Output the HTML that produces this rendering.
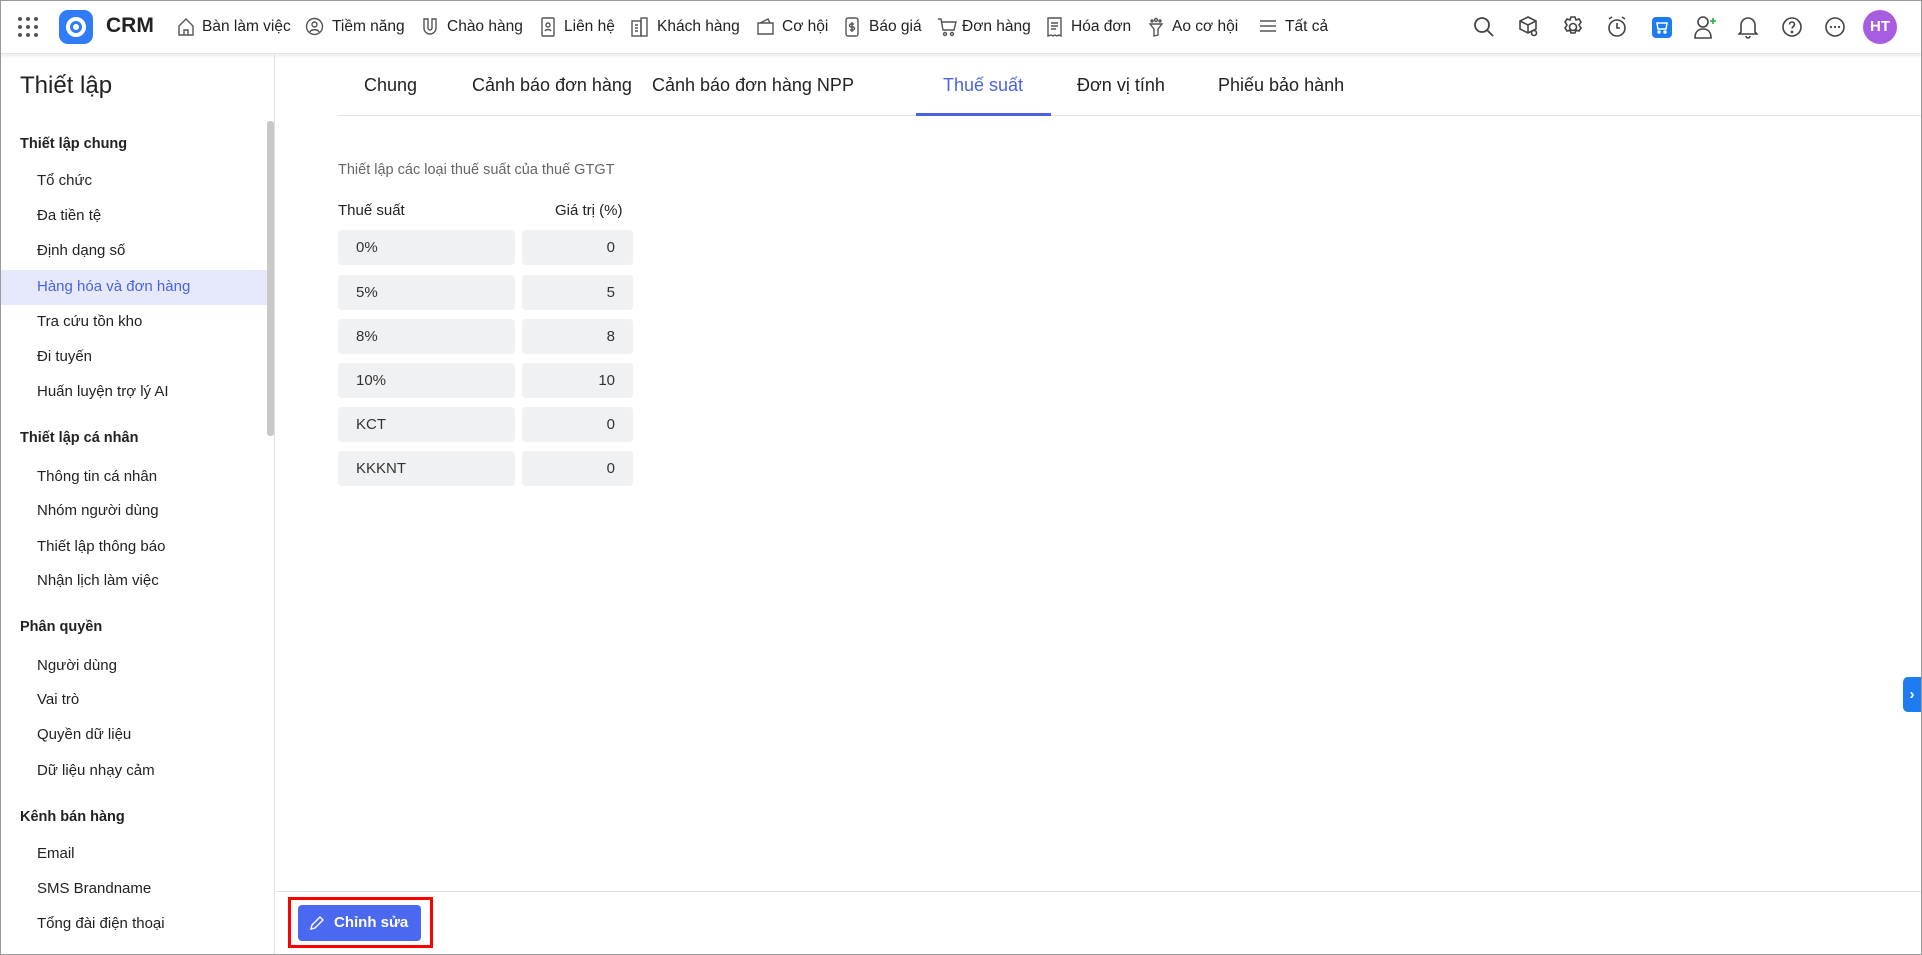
<!DOCTYPE html>
<html><head><meta charset="utf-8"><style>
*{margin:0;padding:0;box-sizing:border-box}
body{width:1922px;height:955px;overflow:hidden;font-family:"Liberation Sans","Noto Sans CJK SC",sans-serif;color:#222;background:#fff;position:relative}
.frame{position:absolute;inset:0;border:1px solid #9a9a9a;pointer-events:none;z-index:10}
.top{position:absolute;left:0;top:0;width:1922px;height:54px;background:#fff;box-shadow:0 2px 4px rgba(0,0,0,.08);border-bottom:1px solid #e4e4e4;z-index:5}
.a{position:absolute;white-space:nowrap}
.nav{font-size:15.5px;color:#222;top:18px}
.ic{position:absolute;top:17px}
.side{position:absolute;left:0;top:55px;width:275px;height:900px;border-right:1px solid #e0e0e0}
.h{font-size:14.5px;font-weight:bold;color:#222;left:20px}
.it{font-size:15px;color:#222;left:37px}
.tab{font-size:18px;top:75px;color:#222}
.cell{position:absolute;background:#f0f1f3;border-radius:4px;height:35px;font-size:15px;line-height:35px;color:#333}
</style></head><body>
<div class="frame"></div>
<div class="top">
<svg class="ic" style="left:17px;top:16px" width="22" height="22" viewBox="0 0 22 22" fill="#555"><circle cx="3" cy="3" r="2"/><circle cx="11" cy="3" r="2"/><circle cx="19" cy="3" r="2"/><circle cx="3" cy="11" r="2"/><circle cx="11" cy="11" r="2"/><circle cx="19" cy="11" r="2"/><circle cx="3" cy="19" r="2"/><circle cx="11" cy="19" r="2"/><circle cx="19" cy="19" r="2"/></svg>
<div class="a" style="left:59px;top:10px;width:34px;height:34px;border-radius:9px;background:#2f7cf6"><svg width="34" height="34" viewBox="0 0 34 34"><circle cx="17" cy="17" r="8" fill="none" stroke="#fff" stroke-width="4"/><circle cx="17" cy="17" r="3" fill="#fff"/></svg></div>
<div class="a" style="left:106px;top:14px;font-size:21px;font-weight:bold">CRM</div>
<span class="a nav" style="left:202px">Bàn làm việc</span>
<span class="a nav" style="left:332px">Tiềm năng</span>
<span class="a nav" style="left:447px">Chào hàng</span>
<span class="a nav" style="left:564px">Liên hệ</span>
<span class="a nav" style="left:657px">Khách hàng</span>
<span class="a nav" style="left:782px">Cơ hội</span>
<span class="a nav" style="left:869px">Báo giá</span>
<span class="a nav" style="left:962px">Đơn hàng</span>
<span class="a nav" style="left:1071px">Hóa đơn</span>
<span class="a nav" style="left:1172px">Ao cơ hội</span>
<span class="a nav" style="left:1285px">Tất cả</span>
<svg class="ic" style="left:177px" width="18" height="20" viewBox="0 0 18 20" fill="none" stroke="#555" stroke-width="1.4"><path d="M2 9L9 2l7 7v9H2z"/><path d="M7 18v-5h4v5"/></svg>
<svg class="ic" style="left:305px" width="19" height="19" viewBox="0 0 19 19" fill="none" stroke="#555" stroke-width="1.4"><circle cx="9.5" cy="9.5" r="8"/><circle cx="9.5" cy="7.5" r="2.5"/><path d="M5 15c1-3 8-3 9 0"/></svg>
<svg class="ic" style="left:421px" width="18" height="20" viewBox="0 0 18 20" fill="none" stroke="#555" stroke-width="1.4"><path d="M3 2v9a6 6 0 0012 0V2h-4v9a2 2 0 01-4 0V2z"/></svg>
<svg class="ic" style="left:540px" width="16" height="20" viewBox="0 0 16 20" fill="none" stroke="#555" stroke-width="1.4"><rect x="2" y="1" width="12" height="18" rx="1"/><circle cx="8" cy="8" r="2"/><path d="M5 14c1-2 5-2 6 0"/></svg>
<svg class="ic" style="left:630px" width="19" height="20" viewBox="0 0 19 20" fill="none" stroke="#555" stroke-width="1.4"><rect x="2" y="4" width="9" height="15"/><rect x="11" y="1" width="6" height="18"/><path d="M5 8h3M5 11h3M5 14h3"/></svg>
<svg class="ic" style="left:756px" width="19" height="19" viewBox="0 0 19 19" fill="none" stroke="#555" stroke-width="1.4"><path d="M2 6h15v11H2zM4 6l8-4 2 4"/></svg>
<svg class="ic" style="left:845px" width="14" height="20" viewBox="0 0 14 20" fill="none" stroke="#555" stroke-width="1.4"><rect x="1" y="1" width="12" height="18" rx="2"/><path d="M7 5v10M9 7H6a1.5 1.5 0 000 3h2a1.5 1.5 0 010 3H5"/></svg>
<svg class="ic" style="left:937px" width="20" height="20" viewBox="0 0 20 20" fill="none" stroke="#555" stroke-width="1.4"><path d="M1 2h3l2 11h11l2-8H5"/><circle cx="8" cy="17" r="1.5"/><circle cx="15" cy="17" r="1.5"/></svg>
<svg class="ic" style="left:1047px" width="15" height="20" viewBox="0 0 15 20" fill="none" stroke="#555" stroke-width="1.4"><path d="M1 1h13v18l-2-1-2 1-2-1-2 1-2-1-3 1z"/><path d="M4 6h7M4 9h7M4 12h5"/></svg>
<svg class="ic" style="left:1148px" width="16" height="20" viewBox="0 0 16 20" fill="none" stroke="#555" stroke-width="1.4"><path d="M2 7h12l-4 5v6l-4 1v-7z"/><circle cx="8" cy="3" r="1.5"/><circle cx="4" cy="4" r="1"/><circle cx="12" cy="4" r="1"/></svg>
<svg class="ic" style="left:1259px" width="18" height="18" viewBox="0 0 18 18" stroke="#555" stroke-width="1.4"><path d="M1 4h16M1 9h16M1 14h16"/></svg>
<svg class="ic" style="left:1473px;top:16px" width="22" height="22" viewBox="0 0 22 22" fill="none" stroke="#444" stroke-width="1.8"><circle cx="9" cy="9" r="7"/><path d="M14 14l6 6"/></svg>
<svg class="ic" style="left:1518px;top:16px" width="22" height="22" viewBox="0 0 22 22" fill="none" stroke="#444" stroke-width="1.6"><path d="M10 1l8 4v8l-8 4-8-4V5z M2 5l8 4 8-4M10 9v8"/><circle cx="16" cy="17" r="2.5"/></svg>
<svg class="ic" style="left:1562px;top:16px" width="22" height="22" viewBox="0 0 22 22" fill="none" stroke="#444" stroke-width="1.6"><circle cx="11" cy="11" r="3.5"/><path d="M9 1h4l1 3 3-1 2 3-2 3 2 3-2 3-3-1-1 3H9l-1-3-3 1-2-3 2-3-2-3 2-3 3 1z"/></svg>
<svg class="ic" style="left:1606px;top:16px" width="22" height="22" viewBox="0 0 22 22" fill="none" stroke="#444" stroke-width="1.6"><circle cx="11" cy="12" r="8"/><path d="M11 7v5h3M3 3l3-2M19 3l-3-2"/></svg>
<div class="a" style="left:1652px;top:17px;width:20px;height:21px;border-radius:4px;background:#1e7cf2"><svg width="20" height="21" viewBox="0 0 20 21" fill="none" stroke="#fff" stroke-width="1.5"><path d="M5 6h10l-1 6H6z"/><circle cx="7" cy="15" r="1"/><circle cx="13" cy="15" r="1"/></svg></div>
<svg class="ic" style="left:1693px;top:14px" width="26" height="26" viewBox="0 0 26 26" fill="none" stroke="#444" stroke-width="1.6"><circle cx="10" cy="8" r="5"/><path d="M2 24c0-6 3-9 8-9s8 3 8 9z"/><path d="M20 4v6M17 7h6" stroke="#2aa84a"/></svg>
<svg class="ic" style="left:1738px;top:15px" width="20" height="24" viewBox="0 0 20 24" fill="none" stroke="#444" stroke-width="1.6"><path d="M3 17V10a7 7 0 0114 0v7l2 2H1z M8 21a2 2 0 004 0"/></svg>
<svg class="ic" style="left:1781px;top:16px" width="22" height="22" viewBox="0 0 22 22" fill="none" stroke="#444" stroke-width="1.6"><circle cx="11" cy="11" r="9"/><path d="M8.5 8.5a2.5 2.5 0 115 0c0 2-2.5 2-2.5 4"/><circle cx="11" cy="16" r=".6"/></svg>
<svg class="ic" style="left:1824px;top:16px" width="22" height="22" viewBox="0 0 22 22" fill="none" stroke="#444" stroke-width="1.6" stroke-linecap="round"><circle cx="11" cy="11" r="9"/><path d="M7 11h.1M11 11h.1M15 11h.1" stroke-width="2.2"/></svg>
<div class="a" style="left:1863px;top:10px;width:34px;height:34px;border-radius:50%;background:#a65de0;color:#fff;font-weight:bold;font-size:15px;line-height:34px;text-align:center">HT</div>
</div>

<div class="side">
<div class="a" style="left:20px;top:17px;font-size:24px;color:#222">Thiết lập</div>
<div class="a" style="left:267px;top:66px;width:7px;height:315px;background:#c8c8c8;border-radius:3px"></div>
<div class="a" style="left:0;top:215px;width:267px;height:35px;background:#e6e9fb"></div>
</div>
<div style="position:absolute;left:0;top:0">
<span class="a h" style="top:136px">Thiết lập chung</span>
<span class="a it" style="top:172px">Tổ chức</span>
<span class="a it" style="top:207px">Đa tiền tệ</span>
<span class="a it" style="top:242px">Định dạng số</span>
<span class="a it" style="top:278px;color:#4a63e6">Hàng hóa và đơn hàng</span>
<span class="a it" style="top:313px">Tra cứu tồn kho</span>
<span class="a it" style="top:348px">Đi tuyến</span>
<span class="a it" style="top:383px">Huấn luyện trợ lý AI</span>
<span class="a h" style="top:430px">Thiết lập cá nhân</span>
<span class="a it" style="top:468px">Thông tin cá nhân</span>
<span class="a it" style="top:502px">Nhóm người dùng</span>
<span class="a it" style="top:538px">Thiết lập thông báo</span>
<span class="a it" style="top:572px">Nhận lịch làm việc</span>
<span class="a h" style="top:619px">Phân quyền</span>
<span class="a it" style="top:657px">Người dùng</span>
<span class="a it" style="top:691px">Vai trò</span>
<span class="a it" style="top:726px">Quyền dữ liệu</span>
<span class="a it" style="top:762px">Dữ liệu nhạy cảm</span>
<span class="a h" style="top:809px">Kênh bán hàng</span>
<span class="a it" style="top:845px">Email</span>
<span class="a it" style="top:880px">SMS Brandname</span>
<span class="a it" style="top:915px">Tổng đài điện thoại</span>
</div>

<span class="a tab" style="left:364px">Chung</span>
<span class="a tab" style="left:472px">Cảnh báo đơn hàng</span>
<span class="a tab" style="left:652px">Cảnh báo đơn hàng NPP</span>
<span class="a tab" style="left:943px;color:#4a63e6">Thuế suất</span>
<span class="a tab" style="left:1077px">Đơn vị tính</span>
<span class="a tab" style="left:1218px">Phiếu bảo hành</span>
<div class="a" style="left:338px;top:115px;width:1584px;height:1px;background:#e2e2e2"></div>
<div class="a" style="left:916px;top:113px;width:135px;height:3px;background:#4a63e6"></div>

<span class="a" style="left:338px;top:162px;font-size:14.5px;color:#666">Thiết lập các loại thuế suất của thuế GTGT</span>
<span class="a" style="left:338px;top:202px;font-size:15px;color:#222">Thuế suất</span>
<span class="a" style="left:555px;top:202px;font-size:15px;color:#222">Giá trị (%)</span>
<div class="cell" style="left:338px;top:230px;width:177px;padding-left:18px">0%</div><div class="cell" style="left:522px;top:230px;width:111px;text-align:right;padding-right:18px">0</div>
<div class="cell" style="left:338px;top:275px;width:177px;padding-left:18px">5%</div><div class="cell" style="left:522px;top:275px;width:111px;text-align:right;padding-right:18px">5</div>
<div class="cell" style="left:338px;top:319px;width:177px;padding-left:18px">8%</div><div class="cell" style="left:522px;top:319px;width:111px;text-align:right;padding-right:18px">8</div>
<div class="cell" style="left:338px;top:363px;width:177px;padding-left:18px">10%</div><div class="cell" style="left:522px;top:363px;width:111px;text-align:right;padding-right:18px">10</div>
<div class="cell" style="left:338px;top:407px;width:177px;padding-left:18px">KCT</div><div class="cell" style="left:522px;top:407px;width:111px;text-align:right;padding-right:18px">0</div>
<div class="cell" style="left:338px;top:451px;width:177px;padding-left:18px">KKKNT</div><div class="cell" style="left:522px;top:451px;width:111px;text-align:right;padding-right:18px">0</div>

<div class="a" style="left:1903px;top:677px;width:18px;height:35px;background:#1e7cf2;border-radius:5px 0 0 5px;color:#fff;font-size:15px;line-height:35px;text-align:center;font-weight:bold">›</div>

<div class="a" style="left:276px;top:891px;width:1646px;height:1px;background:#dedede"></div>
<div class="a" style="left:288px;top:897px;width:145px;height:51px;border:3px solid #f00"></div>
<div class="a" style="left:298px;top:905px;width:123px;height:36px;background:#4a68f0;border-radius:4px;color:#fff;font-size:15px;font-weight:bold;line-height:36px;padding-left:36px">Chỉnh sửa</div>
<svg class="a" style="left:308px;top:914px" width="18" height="18" viewBox="0 0 18 18" fill="none" stroke="#fff" stroke-width="1.4"><path d="M3 15l1-4 8-8 3 3-8 8z"/></svg>
</body></html>
